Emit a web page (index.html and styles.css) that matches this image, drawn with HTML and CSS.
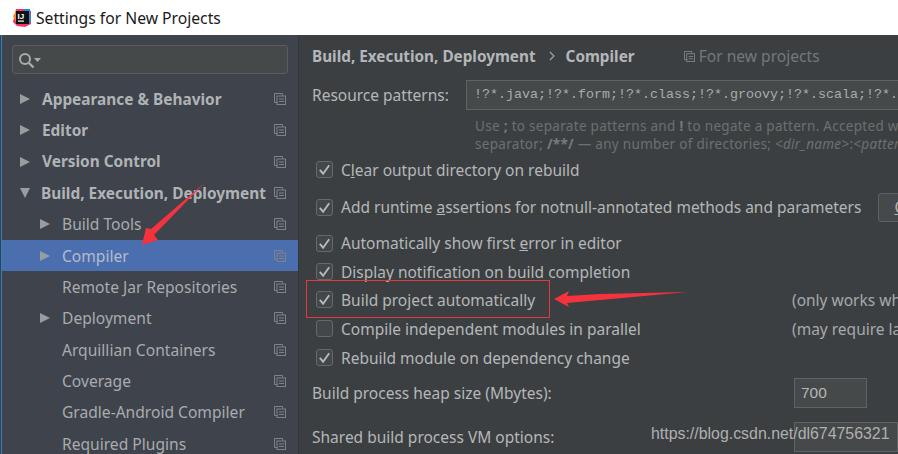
FILE: index.html
```html
<!DOCTYPE html>
<html lang="en">
<head>
    <meta charset="UTF-8">
    <meta name="viewport" content="width=device-width, initial-scale=1.0">
    <title>Settings for New Projects</title>
    <link rel="stylesheet" href="styles.css">
</head>
<body>
    <svg width="0" height="0" class="defs">
        <symbol id="copy" viewBox="0 0 12 12">
            <path d="M3.5 9.5H.5V.5h8v2" fill="none" stroke="currentColor"/>
            <rect x="3" y="3" width="8.5" height="8.5" fill="none" stroke="currentColor"/>
            <path d="M5 6h5M5 8.5h5" stroke="currentColor"/>
        </symbol>
        <symbol id="tick" viewBox="0 0 16 16">
            <path d="M3 8.5l3.5 4L13 3.5" fill="none" stroke="#b9b9b9" stroke-width="2"/>
        </symbol>
    </svg>

    <header class="titlebar">
        <svg class="logo" width="20" height="20" viewBox="0 0 20 20">
            <path d="M4 1h9l6 2v13l-6 3-8-1-4-4z" fill="#f0356b"/>
            <path d="M12 1h6l1 13-5 2z" fill="#1b8fe8"/>
            <path d="M1 8l4-6 3 3-4 9z" fill="#f58a1f"/>
            <rect x="4" y="3" width="13" height="13" fill="#111"/>
            <rect x="6" y="12.5" width="6" height="1.2" fill="#fff"/>
            <text x="5.6" y="10.5" class="logo-text">IJ</text>
        </svg>
        <span class="title">Settings for New Projects</span>
    </header>

    <main class="dialog">
        <!-- 左侧设置树 -->
        <aside class="sidebar">
            <div class="search">
                <svg width="22" height="16" viewBox="0 0 22 16">
                    <circle cx="6" cy="6" r="5" fill="none" stroke="#a9acae" stroke-width="2"/>
                    <path d="M10 10l4.5 4.5" stroke="#a9acae" stroke-width="2.4"/>
                    <path d="M15 5h7l-3.5 4z" fill="#a9acae"/>
                </svg>
            </div>
            <ul class="tree">
                <li class="row top"><i class="arrow"></i><span>Appearance &amp; Behavior</span><svg class="copy"><use href="#copy"/></svg></li>
                <li class="row top"><i class="arrow"></i><span>Editor</span><svg class="copy"><use href="#copy"/></svg></li>
                <li class="row top"><i class="arrow"></i><span>Version Control</span><svg class="copy"><use href="#copy"/></svg></li>
                <li class="row top"><i class="arrow open"></i><span>Build, Execution, Deployment</span><svg class="copy"><use href="#copy"/></svg></li>
                <li class="row sub"><i class="arrow"></i><span>Build Tools</span><svg class="copy"><use href="#copy"/></svg></li>
                <li class="row sub selected"><i class="arrow"></i><span>Compiler</span><svg class="copy"><use href="#copy"/></svg></li>
                <li class="row sub"><i class="arrow none"></i><span>Remote Jar Repositories</span><svg class="copy"><use href="#copy"/></svg></li>
                <li class="row sub"><i class="arrow"></i><span>Deployment</span><svg class="copy"><use href="#copy"/></svg></li>
                <li class="row sub"><i class="arrow none"></i><span>Arquillian Containers</span><svg class="copy"><use href="#copy"/></svg></li>
                <li class="row sub"><i class="arrow none"></i><span>Coverage</span><svg class="copy"><use href="#copy"/></svg></li>
                <li class="row sub"><i class="arrow none"></i><span>Gradle-Android Compiler</span><svg class="copy"><use href="#copy"/></svg></li>
                <li class="row sub"><i class="arrow none"></i><span>Required Plugins</span><svg class="copy"><use href="#copy"/></svg></li>
            </ul>
        </aside>

        <!-- 右侧内容 -->
        <section class="content">
            <div class="crumbs">
                <b>Build, Execution, Deployment</b>
                <svg class="chevron" width="8" height="10" viewBox="0 0 8 10"><path d="M2 1l4 4-4 4" fill="none" stroke="#a0a3a5" stroke-width="1.2"/></svg>
                <b>Compiler</b>
                <span class="scope"><svg class="copy"><use href="#copy"/></svg>For new projects</span>
            </div>

            <div class="patterns">
                <label>Resource patterns:</label>
                <div class="pattern-input">!?*.java;!?*.form;!?*.class;!?*.groovy;!?*.scala;!?*.flex;!?*.kt;!?*.clj</div>
            </div>
            <p class="hint">Use <b>;</b> to separate patterns and <b>!</b> to negate a pattern. Accepted wildcards: <b>?</b> — exactly one symbol; <b>*</b> — zero or more<br>separator; <b>/**/</b> — any number of directories; <em>&lt;dir_name&gt;</em>:<em>&lt;pattern&gt;</em> restrict to source roots</p>

            <div class="options">
                <div class="option first"><span class="check"><svg><use href="#tick"/></svg></span><span>C<u>l</u>ear output directory on rebuild</span></div>
                <div class="option second"><span class="check"><svg><use href="#tick"/></svg></span><span>Add runtime <u>a</u>ssertions for notnull-annotated methods and parameters</span><button class="configure"><u>C</u>onfigure annotations...</button></div>
                <div class="option third"><span class="check"><svg><use href="#tick"/></svg></span><span>Automatically show first <u>e</u>rror in editor</span></div>
                <div class="option fourth"><span class="check"><svg><use href="#tick"/></svg></span><span>Display notification on build completion</span></div>
                <div class="option"><span class="check"><svg><use href="#tick"/></svg></span><span class="option-text">Build project automatically</span><span class="note">(only works while not running / debugging)</span></div>
                <div class="option"><span class="check"></span><span class="option-text">Compile independent modules in parallel</span><span class="note">(may require larger heap size)</span></div>
                <div class="option"><span class="check"><svg><use href="#tick"/></svg></span><span>Rebuild module on dependency change</span></div>
            </div>

            <div class="field heap">
                <label>Build process heap size (Mbytes):</label>
                <div class="small-input">700</div>
            </div>
            <div class="field vm">
                <label>Shared build process VM options:</label>
                <div class="small-input wide"></div>
            </div>
        </section>
    </main>

    <!-- 截图上的标注 -->
    <div class="mark-box"></div>
    <svg class="marks" width="898" height="454" viewBox="0 0 898 454">
        <path d="M205.5 182L151 229l-5-1-4 17 16-5-4-5z" fill="#f5333f"/>
        <path d="M554 299l15-8-2 5 33-2 88-2-88 8-33 3 2 4z" fill="#f5333f"/>
    </svg>
    <div class="watermark">https://blog.csdn.net/dl674756321</div>
</body>
</html>
```

FILE: styles.css
```css
* {
    box-sizing: border-box;
}
body {
    margin: 0;
    width: 898px;
    height: 454px;
    overflow: hidden;
    position: relative;
    background: #fff;
    font-family: 'Noto Sans', 'Open Sans', sans-serif;
    font-size: 15.5px;
    color: #b4b7b9;
}
.defs {
    position: absolute;
}
.titlebar {
    height: 35px;
    padding-left: 12px;
    display: flex;
    align-items: center;
    gap: 4px;
    background: #fff;
}
.logo-text {
    font-family: 'Liberation Sans', sans-serif;
    font-size: 8px;
    font-weight: bold;
    fill: #fff;
}
.title {
    font-size: 15.7px;
    color: #1a1a1a;
}
.dialog {
    display: flex;
    height: 419px;
    border-left: 1px solid #3a3f44;
}
.sidebar {
    width: 298px;
    flex: none;
    padding-top: 10px;
    background: #3e434c;
    border-left: 1px solid #2f80c8;
    border-right: 1px solid #33363a;
    overflow: hidden;
}
.search {
    width: 276px;
    height: 29px;
    margin-left: 10px;
    padding: 6px 0 0 6px;
    background: #45494a;
    border: 1px solid #5a5d5f;
    border-radius: 3px;
}
.tree {
    list-style: none;
    margin: 9.5px 0 0;
    padding: 0;
}
.row {
    height: 31.33px;
    display: flex;
    align-items: center;
    padding-right: 12px;
    white-space: nowrap;
}
.row span {
    flex: 1;
}
.top {
    font-weight: 700;
    font-size: 15.4px;
    padding-left: 18px;
    color: #b0b3b5;
}
.sub {
    font-size: 15.6px;
    padding-left: 38px;
    color: #a9acae;
}
.selected {
    background: #4b6eaf;
    color: #b4bccb;
}
.arrow {
    width: 0;
    height: 0;
    margin-right: 12px;
    border-style: solid;
    border-width: 5.5px 0 5.5px 10px;
    border-color: transparent transparent transparent #9a9d9f;
}
.arrow.open {
    border-width: 10px 5.5px 0;
    border-color: #9a9d9f transparent transparent;
    margin-right: 11px;
}
.arrow.none {
    border-color: transparent;
}
.copy {
    width: 12px;
    height: 12px;
    flex: none;
    color: #7f8386;
}
.content {
    flex: 1;
    min-width: 0;
    padding: 9px 0 0 13px;
    background: #3c3f41;
    white-space: nowrap;
    overflow: hidden;
}
.crumbs {
    height: 24px;
    display: flex;
    align-items: center;
    color: #b4b7b9;
}
.crumbs b {
    font-size: 15.3px;
    font-weight: 700;
}
.chevron {
    margin: 0 10px 0 12px;
}
.scope {
    display: flex;
    align-items: center;
    gap: 4px;
    margin-left: 49px;
    font-size: 15.6px;
    color: #74787a;
}
.scope .copy {
    width: 11px;
    height: 11px;
}
.patterns {
    display: flex;
    align-items: center;
    margin-top: 12px;
}
.patterns label {
    width: 154px;
    flex: none;
}
.pattern-input {
    width: 500px;
    height: 30px;
    flex: none;
    padding: 0 7px;
    line-height: 28px;
    background: #45494a;
    border: 1px solid #606366;
    font-family: 'Liberation Mono', monospace;
    font-size: 13.33px;
    color: #a9acae;
}
.hint {
    margin: 7px 0 0 163px;
    font-size: 13.5px;
    line-height: 18px;
    letter-spacing: 0.3px;
    color: #6c7072;
}
.hint b {
    color: #767a7c;
}
.options {
    margin-top: 0;
}
.option {
    height: 29px;
    display: flex;
    align-items: center;
    padding-left: 4px;
}
.first {
    height: 33px;
}
.second {
    height: 42px;
}
.third {
    height: 30px;
}
.fourth {
    height: 27px;
}
.check {
    width: 17px;
    height: 17px;
    margin-right: 8px;
    flex: none;
    background: #43474a;
    border: 1px solid #66696b;
    border-radius: 3px;
}
.check svg {
    display: block;
    width: 15px;
    height: 15px;
}
.option-text {
    width: 451px;
    flex: none;
}
.note {
    color: #a6a9ab;
}
.configure {
    height: 29px;
    margin-left: 17px;
    padding: 0 15px;
    flex: none;
    background: #45494b;
    border: 1px solid #5e6163;
    border-radius: 3px;
    font: inherit;
    color: #b4b7b9;
}
.field {
    display: flex;
    align-items: center;
}
.field label {
    width: 482px;
    flex: none;
}
.heap {
    margin-top: 6px;
}
.vm {
    margin-top: 14px;
}
.small-input {
    width: 73px;
    height: 30px;
    padding-left: 6px;
    line-height: 28px;
    background: #45494a;
    border: 1px solid #606366;
    font-family: 'Liberation Sans', sans-serif;
    font-size: 15.5px;
    color: #b4b7b9;
}
.small-input.wide {
    width: 300px;
}
/* annotations sit over the screenshot */
.mark-box {
    position: absolute;
    left: 306px;
    top: 280px;
    width: 244px;
    height: 38px;
    border: 1px solid #e23a3a;
}
.marks {
    position: absolute;
    left: 0;
    top: 0;
}
.watermark {
    position: absolute;
    left: 651px;
    top: 425px;
    font-family: 'Liberation Sans', sans-serif;
    font-size: 15.9px;
    color: #b0b0b0;
}
```
